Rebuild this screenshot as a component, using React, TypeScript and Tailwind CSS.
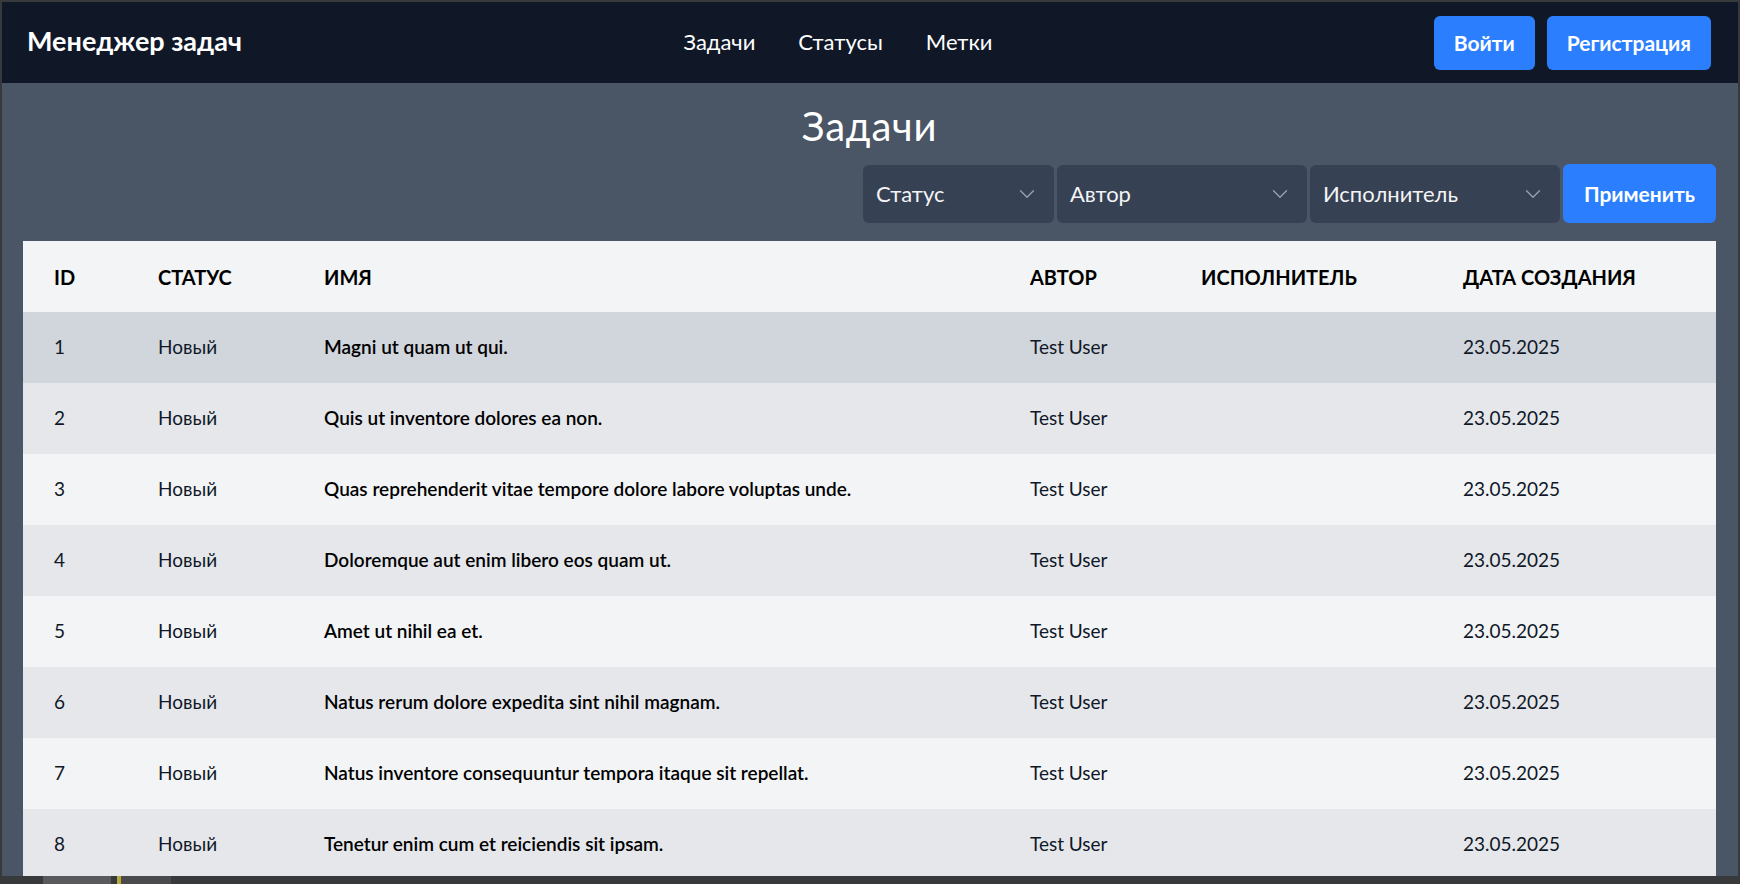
import React from 'react';
import { ChevronDown } from 'lucide-react';

const tasks = [
  { id: 1, status: 'Новый', name: 'Magni ut quam ut qui.', author: 'Test User', executor: '', createdAt: '23.05.2025' },
  { id: 2, status: 'Новый', name: 'Quis ut inventore dolores ea non.', author: 'Test User', executor: '', createdAt: '23.05.2025' },
  { id: 3, status: 'Новый', name: 'Quas reprehenderit vitae tempore dolore labore voluptas unde.', author: 'Test User', executor: '', createdAt: '23.05.2025' },
  { id: 4, status: 'Новый', name: 'Doloremque aut enim libero eos quam ut.', author: 'Test User', executor: '', createdAt: '23.05.2025' },
  { id: 5, status: 'Новый', name: 'Amet ut nihil ea et.', author: 'Test User', executor: '', createdAt: '23.05.2025' },
  { id: 6, status: 'Новый', name: 'Natus rerum dolore expedita sint nihil magnam.', author: 'Test User', executor: '', createdAt: '23.05.2025' },
  { id: 7, status: 'Новый', name: 'Natus inventore consequuntur tempora itaque sit repellat.', author: 'Test User', executor: '', createdAt: '23.05.2025' },
  { id: 8, status: 'Новый', name: 'Tenetur enim cum et reiciendis sit ipsam.', author: 'Test User', executor: '', createdAt: '23.05.2025' },
];

const FilterSelect = ({ label, width }: { label: string; width: string }) => (
  <div className={`${width} h-[58px] flex items-center justify-between pl-[13px] pr-[14px] bg-gray-700 rounded-md text-gray-100 text-[22px]`}>
    <span>{label}</span>
    <ChevronDown size={26} className="text-gray-400" strokeWidth={1.25} />
  </div>
);

const Navbar = () => (
  <nav className="h-[81px] shrink-0 bg-gray-900 flex items-center justify-between pl-[25px] pr-[27px]">
    <div className="text-white text-[27px] font-bold -mt-[2px]">Менеджер задач</div>
    <div className="flex items-center gap-[43px] text-white text-[22px] -mt-[3px]">
      <a>Задачи</a>
      <a>Статусы</a>
      <a>Метки</a>
    </div>
    <div className="flex items-center gap-3">
      <button className="h-[54px] px-5 bg-blue-500 text-white text-[21px] font-bold rounded-md">Войти</button>
      <button className="h-[54px] px-5 bg-blue-500 text-white text-[21px] font-bold rounded-md">Регистрация</button>
    </div>
  </nav>
);

const TaskTable = () => (
  <table className="w-full table-fixed text-left text-[19px] text-gray-900">
    <colgroup>
      <col className="w-[103px]" />
      <col className="w-[166px]" />
      <col className="w-[706px]" />
      <col className="w-[171px]" />
      <col className="w-[262px]" />
      <col />
    </colgroup>
    <thead className="bg-gray-100">
      <tr className="h-[71px] uppercase text-[20px] text-black">
        <th className="pl-[31px] font-bold">ID</th>
        <th className="pl-8 font-bold">Статус</th>
        <th className="pl-8 font-bold">Имя</th>
        <th className="pl-8 font-bold">Автор</th>
        <th className="pl-8 font-bold">Исполнитель</th>
        <th className="pl-8 font-bold">Дата создания</th>
      </tr>
    </thead>
    <tbody>
      {tasks.map((task, i) => (
        <tr
          key={task.id}
          className={`h-[71px] ${i === 0 ? 'bg-gray-300' : i % 2 === 1 ? 'bg-gray-200' : 'bg-gray-100'}`}
        >
          <td className="pl-[31px]">{task.id}</td>
          <td className="pl-8">{task.status}</td>
          <td className="pl-8 font-semibold text-black">{task.name}</td>
          <td className="pl-8">{task.author}</td>
          <td className="pl-8">{task.executor}</td>
          <td className="pl-8">{task.createdAt}</td>
        </tr>
      ))}
    </tbody>
  </table>
);

export default function App() {
  return (
    <div className="h-screen w-full bg-[#38393b] pt-[2px] px-[2px] pb-[8px] flex flex-col overflow-hidden font-['Lato','Noto_Sans',sans-serif]">
      <div className="flex-1 flex flex-col bg-gray-600 overflow-hidden">
        <Navbar />
        <main className="flex-1 overflow-hidden pl-[21px] pr-[22px]">
          <h1 className="text-center text-white text-[40px] tracking-[0.02em] leading-10 mt-[23px]">Задачи</h1>
          <div className="flex justify-end items-center gap-[3px] mt-[18px]">
            <FilterSelect label="Статус" width="w-[191px]" />
            <FilterSelect label="Автор" width="w-[250px]" />
            <FilterSelect label="Исполнитель" width="w-[250px]" />
            <button className="h-[59px] px-[21px] bg-blue-500 text-white text-[21px] font-bold rounded-md">Применить</button>
          </div>
          <div className="mt-[18px]">
            <TaskTable />
          </div>
        </main>
      </div>
      <div className="h-0 relative">
        <div className="absolute top-0 left-[41px] h-[8px] w-[68px] bg-[#5a5a5c]" />
        <div className="absolute top-0 left-[115px] h-[8px] w-[4px] bg-[#b8a93a]" />
        <div className="absolute top-0 left-[119px] h-[8px] w-[50px] bg-[#4a4a4c]" />
      </div>
    </div>
  );
}
